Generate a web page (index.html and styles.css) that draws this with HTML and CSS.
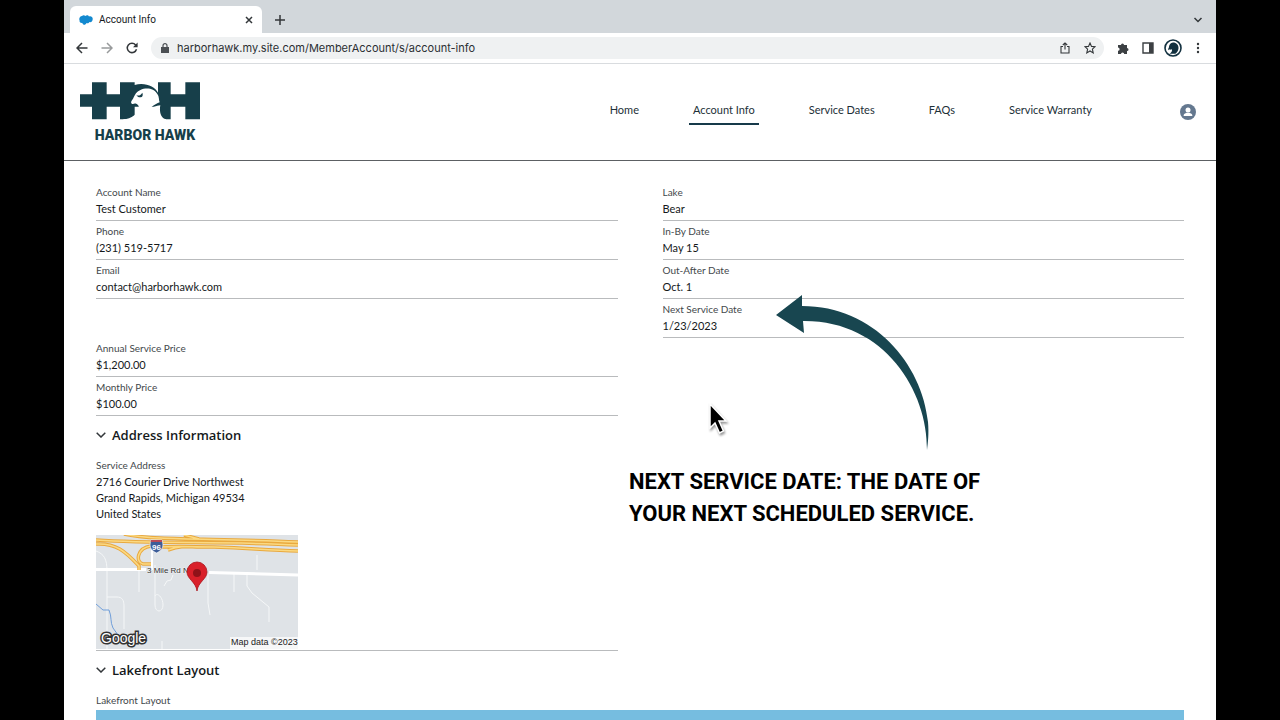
FILE: index.html
```html
<!DOCTYPE html>
<html lang="en">
<head>
<meta charset="utf-8">
<title>Account Info</title>
<link rel="stylesheet" href="styles.css">
</head>
<body>
<div class="window">
  <div class="tabstrip">
    <div class="tab">
      <svg class="tab-icon" viewBox="0 0 14 10" width="14" height="10"><path fill="#1389cf" d="M3 1C4-.2 5.600 0 6.300 1 8-.3 9.500.5 10 1.500c2-.6 4 .5 3.700 2.700C13.500 6.500 12 7.500 10.500 7c-.8 1.500-2.200 1.500-3 1C6.500 10.500 4 10.300 3.300 8 1.500 8.300.2 7 .6 5.500-.4 3.500 1 1 3 1z"/></svg>
      <span class="tab-title">Account Info</span>
      <button class="icon-btn" aria-label="Close tab"><svg width="8" height="8" viewBox="0 0 8 8"><path class="ln" d="M1 1l6 6M7 1L1 7"/></svg></button>
    </div>
    <button class="icon-btn" aria-label="New tab"><svg width="12" height="12" viewBox="0 0 12 12"><path class="ln" d="M6 1v10M1 6h10"/></svg></button>
    <button class="icon-btn tab-search" aria-label="Search tabs"><svg width="10" height="6" viewBox="0 0 10 6"><path class="ln" d="M1.500 1L5 4.500 8.500 1"/></svg></button>
  </div>
  <div class="toolbar">
    <button class="icon-btn" aria-label="Back"><svg width="12" height="12" viewBox="0 0 12 12"><path class="ln" d="M11.500 6H1.200M6 1L1 6l5 5"/></svg></button>
    <button class="icon-btn faded" aria-label="Forward"><svg width="12" height="12" viewBox="0 0 12 12"><path class="ln" d="M.5 6h10.300M6 1l5 5-5 5"/></svg></button>
    <button class="icon-btn" aria-label="Reload"><svg width="12" height="12" viewBox="0 0 12 12"><path class="ln" d="M10.500 7.200A4.700 4.700 0 1 1 9.600 2.900L10.800 4"/><path fill="#33373a" d="M11.600.6v4.600H7z"/></svg></button>
    <div class="omnibox">
      <svg width="8" height="10" viewBox="0 0 8 10"><path fill="#4b4f53" d="M0 4h8v6H0z"/><path fill="none" stroke="#4b4f53" stroke-width="1.200" d="M2 4.500V2.700a2 2 0 0 1 4 0v1.800"/></svg>
      <input class="url" type="text" aria-label="Address" value="harborhawk.my.site.com/MemberAccount/s/account-info">
      <button class="icon-btn" aria-label="Share"><svg width="10" height="12" viewBox="0 0 10 12"><path class="ln thin" d="M3 4.500H1v6.500h8V4.500H7M5 7.500V1M2.800 3L5 .9 7.200 3"/></svg></button>
      <button class="icon-btn" aria-label="Bookmark"><svg width="12" height="12" viewBox="0 0 12 12"><path class="ln thin" d="M6 1l1.500 3.400 3.600.3-2.700 2.500.8 3.700L6 9l-3.200 1.900.8-3.700L.9 4.700l3.600-.3z"/></svg></button>
    </div>
    <button class="icon-btn" aria-label="Extensions"><svg width="12" height="12" viewBox="0 0 12 12"><path fill="#3c4043" d="M1 3h3a1.500 1.500 0 1 1 3 0h3v3a1.500 1.500 0 1 1 0 3v3H7.200a1.600 1.600 0 0 0-3.200 0H1V8.800a1.600 1.600 0 0 0 0-3.200z"/></svg></button>
    <button class="icon-btn" aria-label="Side panel"><svg width="12" height="12" viewBox="0 0 12 12"><path fill="none" stroke="#3c4043" stroke-width="1.400" d="M1 1h10v10H1z"/><path fill="#3c4043" d="M7 1h4v10H7z"/></svg></button>
    <button class="icon-btn profile" aria-label="Profile"><svg width="18" height="18" viewBox="0 0 18 18"><circle cx="9" cy="9" r="8" fill="#fff" stroke="#12303f" stroke-width="1.600"/><path fill="#12303f" d="M9 3.500c3.500 0 5.700 2.500 5.500 5.700-.2 2.500-1.500 4.300-3.100 5.600H5.500C7.500 13.500 8.300 12 8 10.300c-1 .7-1.700.6-2.300 0l-1.200.9c-.5-1-.2-1.800.3-2.400C5 5.800 6.500 3.500 9 3.500z"/></svg></button>
    <button class="icon-btn" aria-label="Menu"><svg width="12" height="12" viewBox="0 0 12 12" fill="#33373a"><circle cx="6" cy="2" r="1.200"/><circle cx="6" cy="6" r="1.200"/><circle cx="6" cy="10" r="1.200"/></svg></button>
  </div>

  <header class="site-header">
    <a class="logo" href="#">
      <svg width="120" height="38" viewBox="30 36 360 114" aria-hidden="true">
        <path fill="#173f4a" d="M30 73h36V37h44v36h40V37h44v8C225 36 255 50 264 68V37h38v36h44V37h44v111h-44v-38h-44v38h-40v-38h-68v38h-44v-38h-40v38H66v-38H30z"/>
        <path fill="#fff" d="M198 70C208 54 248 46 262 72c6 8 4 18 7 25-15 6-29 15-34 27 13-12 23-17 36-18-3 15-1 37 17 42v3H160v-3c25-2 48-18 46-40-6-9-13-8-17-6-7-1-7-6-3-11 5-6 6-13 12-21z"/>
        <path fill="#173f4a" d="M199 74c5 5 12 3 18-6 3 8 0 14-6 14s-10-3-12-8z"/>
      </svg>
      <span class="logo-name">HARBOR HAWK</span>
    </a>
    <nav class="nav">
      <a href="#">Home</a>
      <a href="#" class="current">Account Info</a>
      <a href="#">Service Dates</a>
      <a href="#">FAQs</a>
      <a href="#">Service Warranty</a>
    </nav>
    <button class="icon-btn user" aria-label="User menu"><svg width="16" height="16" viewBox="0 0 16 16"><circle cx="8" cy="8" r="8" fill="#64788f"/><circle cx="8" cy="6" r="2.500" fill="#fff"/><path fill="#fff" d="M3.600 12c0-2.200 1.600-2.700 3-3.200h2.800c1.400.5 3 1 3 3.200z"/></svg></button>
  </header>

  <main class="record">
    <div class="columns">
      <dl class="fields">
        <div class="field"><dt>Account Name</dt><dd>Test Customer</dd></div>
        <div class="field"><dt>Phone</dt><dd>(231) 519-5717</dd></div>
        <div class="field"><dt>Email</dt><dd>contact@harborhawk.com</dd></div>
        <div class="field blank"></div>
        <div class="field"><dt>Annual Service Price</dt><dd>$1,200.00</dd></div>
        <div class="field"><dt>Monthly Price</dt><dd>$100.00</dd></div>
      </dl>
      <dl class="fields">
        <div class="field"><dt>Lake</dt><dd>Bear</dd></div>
        <div class="field"><dt>In-By Date</dt><dd>May 15</dd></div>
        <div class="field"><dt>Out-After Date</dt><dd>Oct. 1</dd></div>
        <div class="field"><dt>Next Service Date</dt><dd>1/23/2023</dd></div>
      </dl>
    </div>

    <section>
      <h2><button class="section-toggle"><svg width="10" height="6" viewBox="0 0 10 6"><path class="ln" d="M.7.700L5 5 9.300.700"/></svg>Address Information</button></h2>
      <div class="columns">
        <dl class="fields">
          <div class="field address">
            <dt>Service Address</dt>
            <dd>2716 Courier Drive Northwest<br>Grand Rapids, Michigan 49534<br>United States</dd>
            <dd class="map">
              <svg width="202" height="114" viewBox="0 0 202 114" role="img" aria-label="Map">
                <path fill="#dfe3e7" d="M0 0h202v114H0z"/>
                <g fill="none" stroke="#f5f7f8">
                  <path d="M0 16c8 3 11 8 11 20v78M11 62h10c5 0 7 3 7 9v23M43 35v22M59 30v40c0 8 8 8 8 0s-6-13-8-9M68 51l3-5 4-1 2-5M112 38v30l2 12M138 37v20M161 20v15M151 37v14l5 7 17 14v15M66 106v8"/>
                  <path stroke="#fff" stroke-width="3" d="M0 34.500h50M113 37.500l89 2.500"/><path stroke="#fff" stroke-width="2" d="M56 10v25"/>
                </g>
                <g fill="none" stroke="#e9a93f" stroke-width="3.500"><path d="M28-1c30 7 90 4 174 8M0 5c60 4 130 1 202 5M0 9c20-1 29 7 43 22v4M60 12c50-2 90 2 142 4M72 15c15-5 20-3 32-3M55 11c-14 2-16 16-8 18h8M88 0l15 4"/></g>
                <g fill="none" stroke="#fbd982" stroke-width="1.500"><path d="M28-1c30 7 90 4 174 8M0 5c60 4 130 1 202 5M0 9c20-1 29 7 43 22v4M60 12c50-2 90 2 142 4M72 15c15-5 20-3 32-3M55 11c-14 2-16 16-8 18h8M88 0l15 4"/></g>
                <path fill="none" stroke="#719fda" d="M0 69l7 6h6c3 7 1 12 4 18l5 7"/>
                <path fill="#3d5d99" stroke="#fff" stroke-width=".6" d="M55 5h11c2 6 1 10-5.500 13C54 15 53 11 55 5z"/><path fill="#b94b58" d="M55 5h11v2H54.600z"/>
                <text class="shield" x="60.500" y="15" text-anchor="middle">96</text>
                <text class="road" x="51" y="38">3 Mile Rd N</text>
                <path fill="#d9202a" stroke="#a9141c" stroke-width=".8" d="M101 56c-1-9-10-12-10-19a10 10 0 0 1 20 0c0 7-9 10-10 19z"/><circle cx="101" cy="38" r="4" fill="#8f1219"/>
                <text class="google" x="5" y="108">Google</text>
                <path fill="#f6f7f8" d="M134 102h68v12h-68z"/>
                <text class="credit" x="135" y="110">Map data ©2023</text>
              </svg>
            </dd>
          </div>
        </dl>
      </div>
    </section>

    <section class="lakefront">
      <h2><button class="section-toggle"><svg width="10" height="6" viewBox="0 0 10 6"><path class="ln" d="M.7.700L5 5 9.300.700"/></svg>Lakefront Layout</button></h2>
      <p class="label">Lakefront Layout</p>
      <div class="lake"></div>
    </section>
  </main>

  <svg class="arrow" width="153" height="156" viewBox="0 0 153 156" aria-hidden="true"><path fill="#184650" d="M0 20L26 0v11c72 0 120 58 126 116 1 12 0 20-1 28C152 96 108 25 27 26l1 12z"/></svg>
  <p class="callout">NEXT SERVICE DATE: THE DATE OF<br>YOUR NEXT SCHEDULED SERVICE.</p>
  <svg class="cursor" width="20" height="34" viewBox="0 0 20 34" aria-hidden="true"><path fill="#000" stroke="#fff" stroke-width="1.500" d="M2 2v24l5-5 4.500 10 4-2L11 19h7z"/></svg>
</div>
</body>
</html>
```
FILE: styles.css
```css
* { box-sizing: border-box; }
body { margin: 0; background: #000; color: #15191b; font-family: Lato, "Open Sans", sans-serif; font-size: 11px; }
h2, p, dl, dd { margin: 0; }
a { color: inherit; text-decoration: none; }
button { font: inherit; color: inherit; border: 0; padding: 0; background: none; }
svg { display: block; flex: none; }
.ln { fill: none; stroke: #33373a; stroke-width: 1.5; }
.thin { stroke-width: 1.1; }

.window { position: relative; display: flex; flex-direction: column; height: 100vh; margin: 0 5%; overflow: hidden; background: #fff; }

.tabstrip { display: flex; align-items: center; gap: 12px; height: 33px; padding: 6px 13px 0 6px; background: #d2d7db; }
.tab { display: flex; align-items: center; gap: 6px; width: 192px; height: 27px; padding: 0 9px; background: #fff; border-radius: 6px 6px 0 0; font-family: Roboto, sans-serif; font-size: 10px; }
.tab-title { flex: 1; }
.tab-search { margin-left: auto; }
.toolbar { display: flex; align-items: center; gap: 13px; height: 31px; padding: 0 12px; border-bottom: 1px solid #d9dcdf; }
.profile { margin: 0 -3px; }
.faded { opacity: .5; }
.omnibox { display: flex; flex: 1; align-items: center; gap: 14px; height: 22px; padding: 0 8px 0 10px; border-radius: 11px; background: #eff1f2; }
.url { flex: 1; min-width: 0; margin-left: -6px; padding: 0; border: 0; outline: 0; background: none; color: #2b2f32; font-family: Inter, sans-serif; font-size: 11px; }

.site-header { display: flex; align-items: center; height: 97px; padding: 0 20px 0 16px; border-bottom: 1px solid #5c6063; }
.logo { display: flex; flex-direction: column; align-items: center; gap: 6px; padding-top: 2px; color: #173f4a; }
.logo-name { padding-left: 10px; font: 900 14px/18px Roboto, sans-serif; }
.nav { display: flex; gap: 46px; margin: 0 84px 2px auto; }
.nav a { padding: 4px 4px 5px; line-height: 16px; border-bottom: 2px solid transparent; color: #1d3038; }
.nav .current { border-color: #173a4a; }

.record { display: flex; flex: 1; flex-direction: column; min-height: 0; padding: 21px 32px 0; }
.columns { display: grid; grid-template-columns: 1fr 1fr; gap: 45px; }
.field { min-height: 39px; padding: 3px 0; border-bottom: 1px solid #b9bbbd; }
.blank { border-color: transparent; }
.field dt, .label { color: #43484b; font-size: 10px; line-height: 14px; }
.field dd { margin-top: 2px; line-height: 16px; }
.section-toggle { display: flex; align-items: center; gap: 6px; height: 38px; font: 600 13px/20px "Open Sans", sans-serif; }
.address { padding: 4px 0 1px; }
.field .map { margin-top: 13px; }
.shield { fill: #fff; font: bold 8px "Liberation Sans", sans-serif; }
.road { fill: #333; stroke: #eef0f2; stroke-width: 1px; paint-order: stroke; font: 8px "Liberation Sans", sans-serif; }
.google { fill: #fff; stroke: #333; stroke-width: 3px; paint-order: stroke; font: 14px "Liberation Sans", sans-serif; }
.credit { fill: #222; font: 9px "Liberation Sans", sans-serif; }
.lakefront { display: flex; flex: 1; flex-direction: column; }
.label { padding: 4px 0 3px; }
.lake { flex: 1; background: #76bde0; }

.arrow { position: absolute; left: 712px; top: 295px; }
.cursor { position: absolute; left: 644px; top: 402px; filter: drop-shadow(1px 2px 1px rgba(0, 0, 0, .4)); }
.callout { position: absolute; left: 565px; top: 466px; color: #000; font: 700 22px/32px Roboto, sans-serif; white-space: nowrap; }
```
